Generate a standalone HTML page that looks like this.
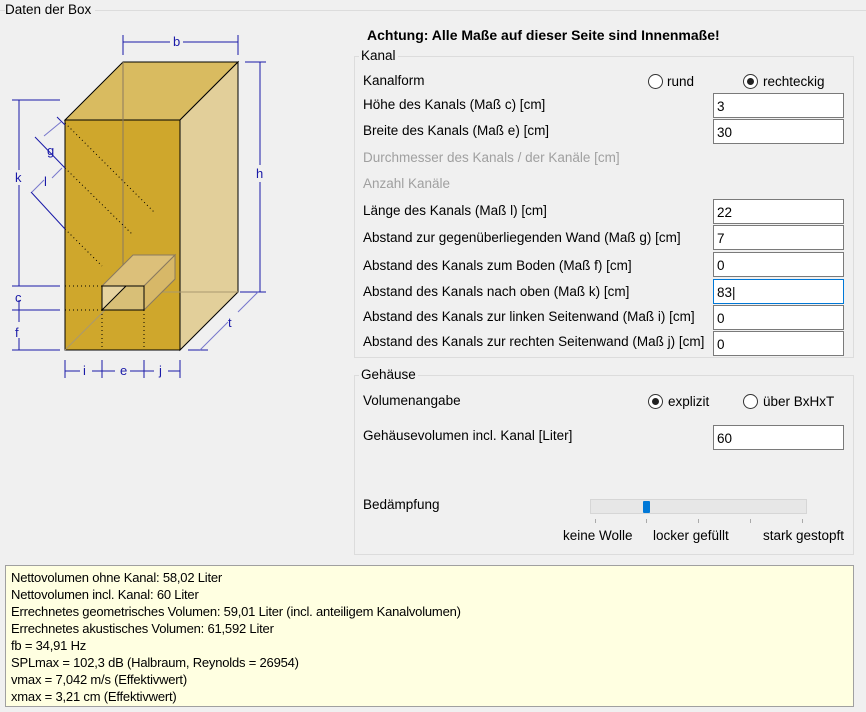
<!DOCTYPE html>
<html><head><meta charset="utf-8"><style>
*{margin:0;padding:0;box-sizing:border-box}
body{width:866px;height:712px;background:#f0f0f0;font-family:"Liberation Sans",sans-serif;font-size:13.5px;color:#000;position:relative;overflow:hidden}
.a{position:absolute;white-space:nowrap}
.in{position:absolute;left:713px;width:131px;height:25px;background:#fff;border:1px solid #7a7a7a;padding:5px 0 0 3px;font-size:13.5px}
.gb{position:absolute;border:1px solid #dcdcdc}
.gt{position:absolute;background:#f0f0f0;padding:0 2px}
.dis{color:#a0a0a0}
.rb{position:absolute;width:15px;height:15px;border:1px solid #333;border-radius:50%;background:#fff}
.rb.on::after{content:"";position:absolute;left:3px;top:3px;width:7px;height:7px;border-radius:50%;background:#222}
.info{position:absolute;left:5px;top:565px;width:849px;height:142px;background:#ffffe1;border:1px solid #a0a0a0;padding:3px 0 0 5px;font-size:13px;line-height:17px;letter-spacing:-0.2px}
</style></head><body>
<div class="a" style="left:0;top:10px;width:866px;border-top:1px solid #dcdcdc"></div>
<div class="a" style="left:5px;top:2px;background:#f0f0f0;padding-right:4px;font-size:13.5px">Daten der Box</div>

<svg class="a" style="left:0;top:0" width="300" height="390" viewBox="0 0 300 390">
<polygon points="65,120 123,62 238,62 180,120" fill="#d9bb60" stroke="#000"/>
<polygon points="180,120 238,62 238,292 180,350" fill="#e2cf9a" stroke="#000"/>
<polygon points="65,120 180,120 180,350 65,350" fill="#cfa72c" stroke="#000"/>
<g stroke="#8a7a60" fill="none" stroke-width="1">
<line x1="123" y1="62" x2="123" y2="292"/>
<line x1="123" y1="292" x2="238" y2="292" stroke="#aa9870"/>
<line x1="65" y1="350" x2="123" y2="292" stroke="#aa9870"/>
<polyline points="133,255 175,255 175,279 162,292"/>
<line x1="102" y1="310" x2="133" y2="279"/>
</g>
<polygon points="102,286 133,255 175,255 144,286" fill="#dcc07a" stroke="#8a7a60"/>
<polygon points="144,286 175,255 175,279 144,310" fill="#d7b868" stroke="#8a7a60"/>
<rect x="102" y="286" width="42" height="24" fill="#d8bf77" stroke="#000"/>
<polygon points="102,286 126,286 102,310" fill="#e6d3a0"/>
<line x1="102" y1="310" x2="126" y2="286" stroke="#000"/>
<rect x="102" y="286" width="42" height="24" fill="none" stroke="#000"/>
<g stroke="#000" stroke-dasharray="1,3" fill="none">
<line x1="65" y1="123" x2="155" y2="213"/>
<line x1="65" y1="168" x2="133" y2="235"/>
<line x1="65" y1="229" x2="102" y2="266"/>
<line x1="65" y1="286" x2="102" y2="286"/>
<line x1="65" y1="310" x2="102" y2="310"/>
<line x1="102" y1="310" x2="102" y2="350"/>
<line x1="144" y1="310" x2="144" y2="350"/>
</g>
<g stroke="#1a1aa8" fill="none" stroke-width="1">
<line x1="123" y1="35" x2="123" y2="55"/><line x1="238" y1="35" x2="238" y2="55"/>
<line x1="123" y1="42" x2="170" y2="42"/><line x1="183" y1="42" x2="238" y2="42"/>
<line x1="245" y1="62" x2="266" y2="62"/><line x1="245" y1="292" x2="266" y2="292"/>
<line x1="260" y1="62" x2="260" y2="165"/><line x1="260" y1="182" x2="260" y2="292"/>
<line x1="12" y1="100" x2="60" y2="100"/>
<line x1="12" y1="286" x2="60" y2="286"/><line x1="12" y1="310" x2="60" y2="310"/><line x1="12" y1="350" x2="60" y2="350"/>
<line x1="19" y1="100" x2="19" y2="170"/><line x1="19" y1="185" x2="19" y2="286"/>
<line x1="19" y1="300" x2="19" y2="322"/><line x1="19" y1="338" x2="19" y2="350"/>
<line x1="57" y1="117" x2="65" y2="125"/>
<line x1="35" y1="137" x2="65" y2="168"/>
<line x1="31" y1="192" x2="65" y2="229"/>
<line x1="44" y1="136" x2="61" y2="122" stroke="#7777cc"/>
<line x1="32" y1="192" x2="44" y2="180" stroke="#7777cc"/>
<line x1="52" y1="178" x2="62" y2="168" stroke="#7777cc"/>
<line x1="65" y1="360" x2="65" y2="378"/><line x1="102" y1="360" x2="102" y2="378"/>
<line x1="144" y1="360" x2="144" y2="378"/><line x1="180" y1="360" x2="180" y2="378"/>
<line x1="65" y1="371" x2="80" y2="371"/><line x1="92" y1="371" x2="115" y2="371"/><line x1="130" y1="371" x2="154" y2="371"/><line x1="168" y1="371" x2="180" y2="371"/>
<line x1="188" y1="350" x2="208" y2="350"/><line x1="240" y1="292" x2="265" y2="292"/>
<line x1="200" y1="350" x2="228" y2="322" stroke="#7777cc"/><line x1="238" y1="312" x2="258" y2="292" stroke="#7777cc"/>
</g>
<g fill="#1a1aa8" font-family="Liberation Sans,sans-serif" font-size="13">
<text x="173" y="46">b</text><text x="256" y="178">h</text><text x="15" y="182">k</text>
<text x="47" y="155">g</text><text x="44" y="186">l</text>
<text x="15" y="302">c</text><text x="15" y="337">f</text>
<text x="83" y="375">i</text><text x="120" y="375">e</text><text x="159" y="375">j</text>
<text x="228" y="327">t</text>
</g>
</svg>

<div class="a" style="left:367px;top:27px;font-weight:bold;font-size:14px">Achtung: Alle Maße auf dieser Seite sind Innenmaße!</div>

<div class="gb" style="left:354px;top:56px;width:500px;height:302px"></div>
<div class="gt" style="left:359px;top:48px">Kanal</div>
<div class="a" style="left:363px;top:73px">Kanalform</div>
<div class="rb" style="left:648px;top:74px"></div><div class="a" style="left:667px;top:74px">rund</div>
<div class="rb on" style="left:743px;top:74px"></div><div class="a" style="left:763px;top:74px">rechteckig</div>
<div class="a" style="left:363px;top:97px">Höhe des Kanals (Maß c) [cm]</div><div class="in" style="top:93px">3</div>
<div class="a" style="left:363px;top:123px">Breite des Kanals (Maß e) [cm]</div><div class="in" style="top:119px">30</div>
<div class="a dis" style="left:363px;top:150px">Durchmesser des Kanals / der Kanäle [cm]</div>
<div class="a dis" style="left:363px;top:176px">Anzahl Kanäle</div>
<div class="a" style="left:363px;top:203px">Länge des Kanals (Maß l) [cm]</div><div class="in" style="top:199px">22</div>
<div class="a" style="left:363px;top:230px">Abstand zur gegenüberliegenden Wand (Maß g) [cm]</div><div class="in" style="top:225px">7</div>
<div class="a" style="left:363px;top:258px">Abstand des Kanals zum Boden (Maß f) [cm]</div><div class="in" style="top:252px">0</div>
<div class="a" style="left:363px;top:284px">Abstand des Kanals nach oben (Maß k) [cm]</div><div class="in" style="top:279px;border-color:#0078d7">83|</div>
<div class="a" style="left:363px;top:309px">Abstand des Kanals zur linken Seitenwand (Maß i) [cm]</div><div class="in" style="top:305px">0</div>
<div class="a" style="left:363px;top:334px">Abstand des Kanals zur rechten Seitenwand (Maß j) [cm]</div><div class="in" style="top:331px">0</div>

<div class="gb" style="left:354px;top:375px;width:500px;height:180px"></div>
<div class="gt" style="left:359px;top:367px">Gehäuse</div>
<div class="a" style="left:363px;top:393px">Volumenangabe</div>
<div class="rb on" style="left:648px;top:394px"></div><div class="a" style="left:668px;top:394px">explizit</div>
<div class="rb" style="left:743px;top:394px"></div><div class="a" style="left:763px;top:394px">über BxHxT</div>
<div class="a" style="left:363px;top:428px">Gehäusevolumen incl. Kanal [Liter]</div><div class="in" style="top:425px">60</div>
<div class="a" style="left:363px;top:497px">Bedämpfung</div>
<div class="a" style="left:590px;top:499px;width:217px;height:15px;background:#e7e7e7;border:1px solid #d6d6d6"></div>
<div class="a" style="left:643px;top:501px;width:7px;height:12px;background:#0078d7;border-radius:1px"></div>
<div class="a" style="left:595px;top:519px;width:1px;height:4px;background:#aaa"></div>
<div class="a" style="left:646px;top:519px;width:1px;height:4px;background:#aaa"></div>
<div class="a" style="left:698px;top:519px;width:1px;height:4px;background:#aaa"></div>
<div class="a" style="left:750px;top:519px;width:1px;height:4px;background:#aaa"></div>
<div class="a" style="left:802px;top:519px;width:1px;height:4px;background:#aaa"></div>
<div class="a" style="left:563px;top:528px">keine Wolle</div>
<div class="a" style="left:653px;top:528px">locker gefüllt</div>
<div class="a" style="left:763px;top:528px">stark gestopft</div>

<div class="info">Nettovolumen ohne Kanal: 58,02 Liter<br>Nettovolumen incl. Kanal: 60 Liter<br>Errechnetes geometrisches Volumen: 59,01 Liter (incl. anteiligem Kanalvolumen)<br>Errechnetes akustisches Volumen: 61,592 Liter<br>fb = 34,91 Hz<br>SPLmax = 102,3 dB (Halbraum, Reynolds = 26954)<br>vmax = 7,042 m/s (Effektivwert)<br>xmax = 3,21 cm (Effektivwert)</div>
</body></html>
